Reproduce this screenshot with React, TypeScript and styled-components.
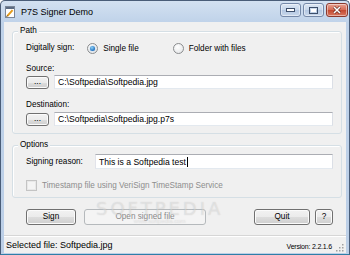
import React from 'react';
import styled, { createGlobalStyle } from 'styled-components';

const Global = createGlobalStyle`
  html, body { margin: 0; padding: 0; background: #ffffff; }
  body { font-family: "Liberation Sans", Arial, sans-serif; color: #000; }
  * { box-sizing: border-box; }
`;

const Window = styled.div`
  position: relative;
  width: 350px;
  height: 255px;
  display: flex;
  flex-direction: column;
  background: linear-gradient(#d3e1f1, #bfd2e9 22px, #bccfe7);
  border: 1px solid #4a5d78;
  border-bottom-color: #2f7fa8;
  border-radius: 5px 5px 0 0;
  overflow: hidden;
`;

const TitleBar = styled.div`
  height: 21px;
  flex-shrink: 0;
  display: flex;
  align-items: center;
  padding: 0 1px 0 4px;
`;

const Title = styled.span`
  flex: 1;
  margin-left: 6px;
  font-size: 9px;
  color: #000;
`;

const CaptionButtons = styled.div`
  display: flex;
  gap: 2px;
  align-self: flex-start;
  margin-top: 2px;
`;

const CapBtn = styled.div<{ $w: number; $close?: boolean }>`
  width: ${(p) => p.$w}px;
  height: 14px;
  border-radius: 3px;
  border: 1px solid ${(p) => (p.$close ? '#8b3a2e' : '#7589a8')};
  background: ${(p) =>
    p.$close
      ? 'linear-gradient(#e9a291, #d46b55 50%, #c3482f 51%, #d9775f)'
      : 'linear-gradient(#dbe6f3, #c6d6ea 50%, #b4c8e2 51%, #c8d7eb)'};
  box-shadow: inset 0 0 0 1px rgba(255, 255, 255, 0.45);
  display: flex;
  align-items: center;
  justify-content: center;
`;

const Client = styled.div`
  position: relative;
  flex: 1;
  margin: 0 3px 1px 3px;
  background: #f0f0f0;
  display: flex;
  flex-direction: column;
  padding: 0 4px 0 8px;
`;

const Group = styled.div<{ $top: number; $pt: number; $pb: number }>`
  position: relative;
  margin-top: ${(p) => p.$top}px;
  border: 1px solid #d5dfe5;
  border-radius: 3px;
  padding: ${(p) => p.$pt}px 8px ${(p) => p.$pb}px 13px;
  display: flex;
  flex-direction: column;
  box-shadow: inset 1px 1px 0 #ffffff;
`;

const Legend = styled.span`
  position: absolute;
  top: -6px;
  left: 5px;
  padding: 0 2px;
  background: #f0f0f0;
  font-size: 8.2px;
  line-height: 10px;
`;

const Label = styled.div<{ $top?: number }>`
  margin-top: ${(p) => p.$top ?? 0}px;
  font-size: 8.2px;
  line-height: 10px;
  height: 10px;
  white-space: nowrap;
`;

const SignRow = styled.div`
  height: 12px;
  display: flex;
  align-items: center;
`;

const RadioItem = styled.div<{ $left: number }>`
  position: relative;
  margin-left: ${(p) => p.$left}px;
  display: flex;
  align-items: center;
  gap: 5px;
  font-size: 8.2px;
  white-space: nowrap;
`;

const RadioCircle = styled.span<{ $on?: boolean }>`
  width: 11px;
  height: 11px;
  border-radius: 50%;
  border: 1px solid #8a8c8e;
  background: radial-gradient(circle at 40% 35%, #ffffff, #dfe1e3);
  display: flex;
  align-items: center;
  justify-content: center;
  &::after {
    content: '';
    display: ${(p) => (p.$on ? 'block' : 'none')};
    width: 5px;
    height: 5px;
    border-radius: 50%;
    background: radial-gradient(circle at 40% 35%, #8fd3f7, #1f6fbf 70%, #144f93);
    box-shadow: 0 0 1px #3b8ad8;
  }
`;

const FileRow = styled.div<{ $top: number }>`
  margin-top: ${(p) => p.$top}px;
  height: 14px;
  display: flex;
  align-items: center;
  gap: 5px;
`;

const Button = styled.div<{ $w: number; $h?: number; $disabled?: boolean }>`
  width: ${(p) => p.$w}px;
  height: ${(p) => p.$h ?? 16}px;
  flex-shrink: 0;
  border-radius: 3px;
  border: 1px solid ${(p) => (p.$disabled ? '#b5b9bc' : '#707070')};
  background: ${(p) =>
    p.$disabled
      ? '#f4f4f4'
      : 'linear-gradient(#f2f2f2, #ebebeb 50%, #dddddd 51%, #cfcfcf)'};
  box-shadow: inset 0 0 0 1px ${(p) => (p.$disabled ? '#f4f4f4' : '#fbfbfb')};
  color: ${(p) => (p.$disabled ? '#8a8a8a' : '#000')};
  font-size: 8.2px;
  display: flex;
  align-items: center;
  justify-content: center;
  white-space: nowrap;
  line-height: 1;
`;

const TextBox = styled.div`
  position: relative;
  flex: 1;
  height: 100%;
  background: #fff;
  border: 1px solid #e3e9ef;
  border-top-color: #abadb3;
  border-left-color: #e2e3ea;
  border-right-color: #dbdfe6;
  font-size: 8.6px;
  display: flex;
  align-items: center;
  padding-left: 3px;
  white-space: nowrap;
`;

const Caret = styled.span`
  display: inline-block;
  width: 1px;
  height: 10px;
  background: #000;
  margin-left: 1px;
`;

const ReasonRow = styled.div`
  height: 15px;
  display: flex;
  align-items: center;
`;

const ReasonLabel = styled.span`
  width: 69px;
  flex-shrink: 0;
  font-size: 8.2px;
  white-space: nowrap;
`;

const CheckRow = styled.div`
  margin-top: 11px;
  height: 11px;
  display: flex;
  align-items: center;
  gap: 5px;
  font-size: 8.2px;
  color: #8d8d8d;
  white-space: nowrap;
`;

const CheckBox = styled.span`
  width: 11px;
  height: 11px;
  border: 1px solid #c4c4c4;
  background: #f4f4f4;
  box-shadow: inset 0 0 0 1px #e8e8e8;
`;

const ButtonRow = styled.div`
  margin-top: 11px;
  margin-left: 14px;
  margin-right: 9px;
  height: 16px;
  display: flex;
  align-items: center;
`;

const Spacer = styled.div`
  flex: 1;
`;

const StatusBar = styled.div`
  margin: auto -4px 0 -8px;
  height: 18px;
  border-top: 1px solid #d6d6d6;
  box-shadow: inset 0 1px 0 #ffffff;
  display: flex;
  align-items: center;
  padding: 1px 2px 0 2px;
`;

const StatusText = styled.span`
  flex: 1;
  font-size: 9px;
  white-space: nowrap;
`;

const VersionText = styled.span`
  font-size: 7px;
  letter-spacing: -0.2px;
  white-space: nowrap;
  margin-top: 3px;
`;

const Grip = styled.svg`
  margin-left: 3px;
  align-self: flex-end;
  margin-bottom: 1px;
`;

const Watermark = styled.div`
  position: absolute;
  left: 92px;
  top: 176px;
  display: flex;
  flex-direction: column;
  align-items: center;
  pointer-events: none;
`;

const WatermarkBig = styled.span`
  font-family: "DejaVu Sans", sans-serif;
  font-size: 18px;
  letter-spacing: 3px;
  color: rgba(255, 255, 255, 0.35);
  text-shadow: 0 0 1px rgba(120, 120, 120, 0.3);
`;

const WatermarkSmall = styled.span`
  font-size: 6px;
  margin-top: -1px;
  color: rgba(255, 255, 255, 0.4);
  text-shadow: 0 0 1px rgba(120, 120, 120, 0.3);
`;

const AppIcon = () => (
  <svg width="10" height="12" viewBox="0 0 10 12">
    <rect x="0.5" y="0.5" width="9" height="11" fill="#fff" stroke="#7b8798" />
    <rect x="1" y="1" width="8" height="2" fill="#5b6b82" />
    <path d="M2.2 10.2 L7.6 4.2" stroke="#e39b1c" strokeWidth="2" />
    <path d="M1.6 10.8 L2.4 9.6" stroke="#4a3a20" strokeWidth="1" />
  </svg>
);

export default function App() {
  return (
    <>
      <Global />
      <Window>
        <TitleBar>
          <AppIcon />
          <Title>P7S Signer Demo</Title>
          <CaptionButtons>
            <CapBtn $w={21}>
              <svg width="9" height="4" viewBox="0 0 9 4">
                <rect x="0.5" y="0.5" width="8" height="3" fill="#fff" stroke="#3d4f6b" />
              </svg>
            </CapBtn>
            <CapBtn $w={21}>
              <svg width="9" height="7" viewBox="0 0 9 7">
                <rect x="0.5" y="0.5" width="8" height="6" fill="none" stroke="#3d4f6b" />
                <rect x="2" y="2" width="5" height="3" fill="#fff" />
              </svg>
            </CapBtn>
            <CapBtn $w={22} $close>
              <svg width="10" height="8" viewBox="0 0 10 8">
                <path d="M2 1 L8 7 M8 1 L2 7" stroke="#5a1e14" strokeWidth="2.6" />
                <path d="M2 1 L8 7 M8 1 L2 7" stroke="#fff" strokeWidth="1.6" />
              </svg>
            </CapBtn>
          </CaptionButtons>
        </TitleBar>
        <Client>
          <Group $top={9} $pt={10} $pb={7}>
            <Legend>Path</Legend>
            <SignRow>
              <Label>Digitally sign:</Label>
              <RadioItem $left={13}>
                <RadioCircle $on />
                Single file
              </RadioItem>
              <RadioItem $left={34}>
                <RadioCircle />
                Folder with files
              </RadioItem>
            </SignRow>
            <Label $top={10}>Source:</Label>
            <FileRow $top={1}>
              <Button $w={23} $h={13}>...</Button>
              <TextBox>C:\Softpedia\Softpedia.jpg</TextBox>
            </FileRow>
            <Label $top={11}>Destination:</Label>
            <FileRow $top={2}>
              <Button $w={23} $h={13}>...</Button>
              <TextBox>C:\Softpedia\Softpedia.jpg.p7s</TextBox>
            </FileRow>
          </Group>
          <Group $top={11} $pt={8} $pb={6}>
            <Legend>Options</Legend>
            <ReasonRow>
              <ReasonLabel>Signing reason:</ReasonLabel>
              <TextBox>
                This is a Softpedia test
                <Caret />
              </TextBox>
            </ReasonRow>
            <CheckRow>
              <CheckBox />
              Timestamp file using VeriSign TimeStamp Service
            </CheckRow>
          </Group>
          <ButtonRow>
            <Button $w={50}>Sign</Button>
            <Button $w={122} $disabled style={{ marginLeft: 8 }}>
              Open signed file
            </Button>
            <Spacer />
            <Button $w={56}>Quit</Button>
            <Button $w={18} style={{ marginLeft: 5 }}>?</Button>
          </ButtonRow>
          <StatusBar>
            <StatusText>Selected file: Softpedia.jpg</StatusText>
            <VersionText>Version: 2.2.1.6</VersionText>
            <Grip width="9" height="9" viewBox="0 0 9 9">
              {[
                [7, 1],
                [7, 4],
                [4, 4],
                [7, 7],
                [4, 7],
                [1, 7],
              ].map(([x, y]) => (
                <rect key={`${x}-${y}`} x={x} y={y} width="1.5" height="1.5" fill="#a0a0a0" />
              ))}
            </Grip>
          </StatusBar>
          <Watermark>
            <WatermarkBig>SOFTPEDIA</WatermarkBig>
            <WatermarkSmall>www.softpedia.com</WatermarkSmall>
          </Watermark>
        </Client>
      </Window>
    </>
  );
}
